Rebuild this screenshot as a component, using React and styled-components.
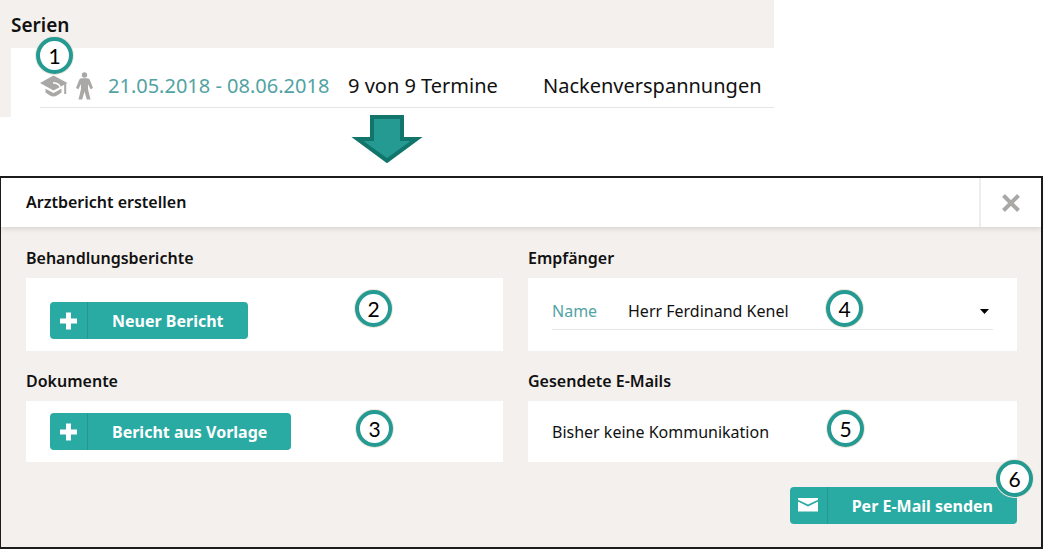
import React from 'react'
import styled, { createGlobalStyle } from 'styled-components'

const colors = {
  black: '#111111',
  white: '#ffffff',
  page: '#f4f0ed',
  teal: '#29aaa3',
  tealLine: '#239790',
  tealRing: '#259a92',
  tealDark: '#12756c',
  link: '#52a3a3',
  icon: '#a9a8a7',
  line: '#e6e6e6',
}

const fonts = {
  body: "'Noto Sans', 'Open Sans', sans-serif",
  badge: "Lato, 'Liberation Sans', sans-serif",
}

const GlobalStyle = createGlobalStyle`
  * {
    box-sizing: border-box;
  }

  body {
    margin: 0;
    background: ${colors.white};
    color: ${colors.black};
    font-family: ${fonts.body};
  }
`

const Page = styled.main`
  padding-right: 2px;
`

//Series
const Overview = styled.div`
  width: 74.2%;
`

const Series = styled.section`
  padding: 0 0 0 11px;
  background: ${colors.page};
`

const SeriesTitle = styled.h1`
  margin: 0;
  padding: 11px 0 9px;
  font-size: 19px;
  font-weight: 600;
  line-height: 28px;
`

const SeriesPanel = styled.div`
  position: relative;
  padding: 16px 0 9px 29px;
  background: ${colors.white};
`

const SeriesRow = styled.div`
  display: grid;
  grid-template-columns: 68px 240px 195px 1fr;
  align-items: center;
  height: 44px;
  border-bottom: 1px solid ${colors.line};
  font-size: 20px;
  line-height: 28px;
  white-space: nowrap;
`

const SeriesIcons = styled.span`
  display: flex;
  align-items: center;
  gap: 8px;
  color: ${colors.icon};
`

const DateLink = styled.a`
  color: ${colors.link};
  text-decoration: none;
`

const ArrowRow = styled.div`
  display: flex;
  justify-content: center;
  height: 59px;

  svg {
    position: relative;
    top: -2px;
  }
`

//Dialog
const Dialog = styled.section`
  border: 2px solid #1c1c1c;
  border-left-width: 1px;
  background: ${colors.page};
`

const DialogHeader = styled.header`
  display: flex;
  align-items: stretch;
  justify-content: space-between;
  height: 49px;
  padding-left: 25px;
  background: ${colors.white};
  box-shadow: 0 2px 5px rgba(0, 0, 0, 0.12);
`

const Heading = styled.h2`
  margin: 0;
  font-size: 16px;
  font-weight: 600;
  line-height: 24px;
`

const DialogTitle = styled(Heading)`
  padding: 12px 0;
`

const CloseButton = styled.button`
  display: flex;
  align-items: center;
  justify-content: center;
  width: 62px;
  padding: 0;
  border: 0;
  border-left: 2px solid #efedec;
  background: none;
  color: ${colors.icon};
  cursor: pointer;
`

const Columns = styled.div`
  display: grid;
  grid-template-columns: 477fr 489fr;
  gap: 18px 25px;
  padding: 19px 24px 0 25px;
`

const Card = styled.div`
  position: relative;
  display: flex;
  align-items: flex-start;
  height: ${(props) => (props.$tall ? 73 : 61)}px;
  margin-top: 8px;
  padding: ${(props) => props.$inset || 12}px 24px 0;
  background: ${colors.white};
`

const Body = styled.p`
  margin: 0;
  padding: 7px 0;
  font-size: 16px;
  line-height: 24px;
`

const Field = styled.div`
  display: flex;
  flex: 1;
  align-items: center;
  height: 38px;
  border-bottom: 1px solid ${colors.line};
  font-size: 16px;
  line-height: 24px;
`

const FieldLabel = styled.label`
  width: 76px;
  color: ${colors.link};
`

const SelectBox = styled.div`
  position: relative;
  flex: 1;

  svg {
    position: absolute;
    top: 10px;
    right: 4px;
    pointer-events: none;
  }
`

const Select = styled.select`
  display: block;
  width: 100%;
  height: 24px;
  padding: 0;
  border: 0;
  appearance: none;
  background: none;
  color: ${colors.black};
  font: inherit;
`

const Actions = styled.footer`
  display: flex;
  justify-content: flex-end;
  padding: 25px 24px 23px;
`

const ActionSlot = styled.div`
  position: relative;
`

const Button = styled.button`
  display: flex;
  align-items: center;
  height: 37px;
  padding: 0;
  border: 0;
  border-radius: 4px;
  background: ${colors.teal};
  color: ${colors.white};
  font-family: ${fonts.body};
  font-size: 16px;
  font-weight: 700;
  line-height: 24px;
  white-space: nowrap;
  cursor: pointer;
`

const ButtonIcon = styled.span`
  display: flex;
  align-items: center;
  justify-content: center;
  width: 38px;
  height: 100%;
  border-right: 1px solid ${colors.tealLine};
`

const ButtonText = styled.span`
  padding: 0 24px;
`

const Badge = styled.span`
  position: absolute;
  top: ${(props) => props.$top}px;
  left: ${(props) => props.$left};
  display: flex;
  align-items: center;
  justify-content: center;
  width: 37px;
  height: 37px;
  border: 4px solid ${colors.tealRing};
  border-radius: 50%;
  background: ${colors.white};
  box-shadow: 0 0 0 1px #ece7db;
  color: #000000;
  font-family: ${fonts.badge};
  font-size: 21px;
  line-height: 28px;
`

const CapIcon = () => (
  <svg width="28" height="22" viewBox="0 0 28 22" fill="currentColor" aria-hidden="true">
    <path d="M0 8 13.500 0.500 27.500 8 13.500 15.500Z" />
    <path d="M25.200 8.500V19" fill="none" stroke="currentColor" strokeWidth="2" />
    <path d="M13 7.800Q19.500 8.200 20.200 12.500" fill="none" stroke={colors.white} strokeWidth="1.500" />
    <path d="M5.500 13.800 13.500 18 21.500 13.800V17.500L17 20.500Q13.500 22.500 10 20.500L5.500 17.500Z" />
  </svg>
)

const PersonIcon = () => (
  <svg width="17" height="28" viewBox="0 0 17 28" fill="currentColor" aria-hidden="true">
    <circle cx="8.500" cy="3" r="2.700" />
    <path d="M6 6.200H11C12.800 6.200 13.500 7 14.200 8.700L17 16 14.600 17.200 12 12V17L14.500 27.500H10.800L8.500 19.500 6.200 27.500H2.500L5 17V12L2.400 17.200 0 16 2.800 8.700C3.500 7 4.200 6.200 6 6.200Z" />
  </svg>
)

const DownArrow = () => (
  <svg width="72" height="49" viewBox="0 0 72 49" aria-hidden="true">
    <path
      d="M21 2H51V24H65.500L36 45.700 6.500 24H21Z"
      fill={colors.tealRing}
      stroke={colors.tealDark}
      strokeWidth="4"
    />
  </svg>
)

const CloseIcon = () => (
  <svg width="18" height="18" viewBox="0 0 18 18" aria-hidden="true">
    <path d="M1.500 1.500 16.500 16.500M16.500 1.500 1.500 16.500" stroke="currentColor" strokeWidth="4" />
  </svg>
)

const PlusIcon = () => (
  <svg width="18" height="18" viewBox="0 0 18 18" aria-hidden="true">
    <path d="M8.500 0.500V17.500M0 9H17" stroke="currentColor" strokeWidth="5" />
  </svg>
)

const MailIcon = () => (
  <svg width="20" height="18" viewBox="0 0 20 18" fill="currentColor" aria-hidden="true">
    <path d="M0 1H20V2.800L10 7.500 0 2.800Z" />
    <path d="M0 4.600 10 9.500 20 4.600V14.500H0Z" />
  </svg>
)

const CaretIcon = () => (
  <svg width="9" height="5" viewBox="0 0 9 5" aria-hidden="true">
    <path d="M0 0H9L4.500 5Z" />
  </svg>
)

const IconButton = ({ icon, children }) => (
  <Button type="button">
    <ButtonIcon>{icon}</ButtonIcon>
    <ButtonText>{children}</ButtonText>
  </Button>
)

const App = () => (
  <>
    <GlobalStyle />
    <Page>
      <Overview>
        <Series>
          <SeriesTitle>Serien</SeriesTitle>
          <SeriesPanel>
            <SeriesRow>
              <SeriesIcons>
                <CapIcon />
                <PersonIcon />
              </SeriesIcons>
              <DateLink href="#serie">21.05.2018 - 08.06.2018</DateLink>
              <span>9 von 9 Termine</span>
              <span>Nackenverspannungen</span>
            </SeriesRow>
            <Badge $top={-11} $left="25px">1</Badge>
          </SeriesPanel>
        </Series>
        <ArrowRow>
          <DownArrow />
        </ArrowRow>
      </Overview>

      <Dialog aria-labelledby="dialog-title">
        <DialogHeader>
          <DialogTitle id="dialog-title">Arztbericht erstellen</DialogTitle>
          <CloseButton type="button" aria-label="Schliessen">
            <CloseIcon />
          </CloseButton>
        </DialogHeader>
        <Columns>
          <section>
            <Heading>Behandlungsberichte</Heading>
            <Card $tall $inset={24}>
              <IconButton icon={<PlusIcon />}>Neuer Bericht</IconButton>
              <Badge $top={12} $left="329px">2</Badge>
            </Card>
          </section>
          <section>
            <Heading>Empfänger</Heading>
            <Card $tall $inset={14}>
              <Field>
                <FieldLabel htmlFor="recipient">Name</FieldLabel>
                <SelectBox>
                  <Select id="recipient" defaultValue="kenel">
                    <option value="kenel">Herr Ferdinand Kenel</option>
                  </Select>
                  <CaretIcon />
                </SelectBox>
              </Field>
              <Badge $top={12} $left="298px">4</Badge>
            </Card>
          </section>
          <section>
            <Heading>Dokumente</Heading>
            <Card>
              <IconButton icon={<PlusIcon />}>Bericht aus Vorlage</IconButton>
              <Badge $top={9} $left="330px">3</Badge>
            </Card>
          </section>
          <section>
            <Heading>Gesendete E-Mails</Heading>
            <Card>
              <Body>Bisher keine Kommunikation</Body>
              <Badge $top={9} $left="299px">5</Badge>
            </Card>
          </section>
        </Columns>
        <Actions>
          <ActionSlot>
            <IconButton icon={<MailIcon />}>Per E-Mail senden</IconButton>
            <Badge $top={-27} $left="calc(100% - 21px)">6</Badge>
          </ActionSlot>
        </Actions>
      </Dialog>
    </Page>
  </>
)

export default App
